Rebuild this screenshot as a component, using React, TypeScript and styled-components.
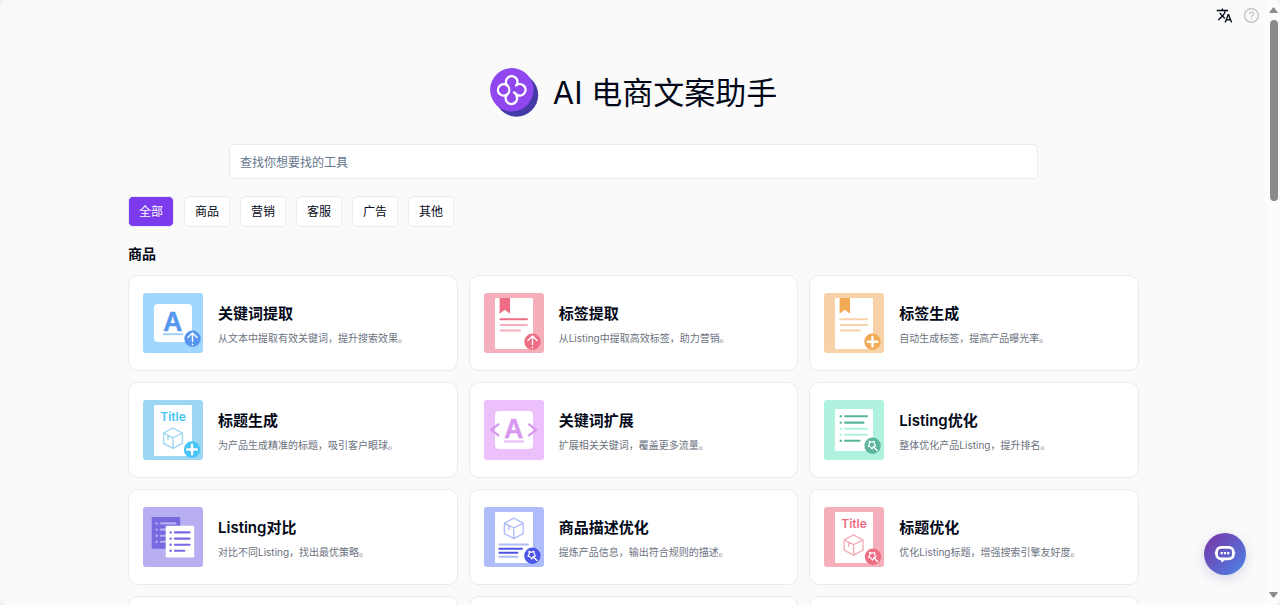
import React from "react";
import styled, { createGlobalStyle } from "styled-components";
import { MdTranslate } from "react-icons/md";
import { AiOutlineQuestionCircle } from "react-icons/ai";

const GlobalStyle = createGlobalStyle`
  *, *::before, *::after { box-sizing: border-box; }
  body {
    margin: 0;
    background: #f1f1f1;
    color: #020817;
    font-family: Inter, "Noto Sans CJK SC", sans-serif;
  }
  button, input { font-family: inherit; }
`;

const Shell = styled.div`
  display: flex;
  height: 100vh;
  border-radius: 8px;
  overflow: hidden;
  background: #fafafa;
`;

const Scroller = styled.div`
  flex: 1;
  min-width: 0;
  overflow-y: auto;
  scrollbar-width: none;
`;

const Rail = styled.div`
  width: 13px;
  display: flex;
  flex-direction: column;
  align-items: center;
  justify-content: space-between;
  padding: 7px 0;
  background: #fcfcfc;
`;

const RailTop = styled.div`
  flex: 1;
  display: flex;
  flex-direction: column;
  align-items: center;
  gap: 7px;
`;

const Thumb = styled.div`
  width: 8px;
  height: 31%;
  border-radius: 4px;
  background: #8b8b8b;
`;

const TopBar = styled.div`
  display: flex;
  justify-content: flex-end;
  align-items: center;
  gap: 10px;
  height: 31px;
  padding: 0 7px;
`;

const IconButton = styled.button<{ $color: string }>`
  display: flex;
  padding: 0;
  border: 0;
  background: none;
  color: ${(p) => p.$color};
  cursor: pointer;
`;

const Main = styled.main`
  display: flex;
  flex-direction: column;
  padding: 37px 128px 24px;
`;

const Hero = styled.header`
  display: flex;
  justify-content: center;
  align-items: center;
  gap: 14px;
  height: 49px;
`;

const HeroTitle = styled.h1`
  margin: 0;
  font-size: 31px;
  font-weight: 400;
  line-height: 48px;
`;

const Search = styled.input`
  align-self: center;
  width: 80%;
  height: 35px;
  margin: 27px 0 17px;
  padding: 1px 10px 0;
  border: 1px solid #e6eaf1;
  border-radius: 5px;
  background: #fff;
  font-size: 12px;
  color: #020817;
  outline: none;
  &::placeholder { color: #64748b; opacity: 1; }
`;

const Filters = styled.div`
  display: flex;
  gap: 10px;
`;

const FilterButton = styled.button<{ $active?: boolean }>`
  height: 31px;
  padding: 0 10px;
  border: 1px solid #e6eaf1;
  border-radius: 5px;
  background: ${(p) => (p.$active ? "#7c3aed" : "#fff")};
  color: ${(p) => (p.$active ? "#f8fafc" : "#020817")};
  font-size: 12px;
  line-height: 20px;
  cursor: pointer;
`;

const SectionTitle = styled.h2`
  margin: 17px 0 11px;
  font-size: 14px;
  font-weight: 700;
  line-height: 20px;
`;

const Grid = styled.div`
  display: grid;
  grid-template-columns: repeat(3, minmax(0, 1fr));
  gap: 11px;
`;

const Card = styled.a`
  display: flex;
  align-items: center;
  gap: 15px;
  min-height: 96px;
  padding: 17px 14px;
  border: 1px solid #e6eaf1;
  border-radius: 10px;
  background: #fff;
  color: inherit;
  text-decoration: none;
`;

const Tile = styled.svg`
  flex: none;
  width: 60px;
  height: 60px;
`;

const CardText = styled.div`
  display: flex;
  flex-direction: column;
  gap: 2px;
  min-width: 0;
`;

const CardTitle = styled.h3`
  margin: 0;
  font-size: 15px;
  font-weight: 600;
  line-height: 28px;
`;

const CardDesc = styled.p`
  margin: 0;
  color: #6b7280;
  font-size: 10px;
  line-height: 16px;
`;

const ChatButton = styled.button`
  position: fixed;
  right: 34px;
  bottom: 30px;
  display: flex;
  align-items: center;
  justify-content: center;
  width: 42px;
  height: 42px;
  padding: 0;
  border: 0;
  border-radius: 50%;
  background: linear-gradient(135deg, #7a32a4 0%, #4a86e8 100%);
  box-shadow: 0 3px 12px rgba(80, 90, 170, 0.22);
  cursor: pointer;
`;

function Logo() {
  return (
    <svg width="49" height="49" viewBox="0 0 49 49" aria-hidden="true">
      <circle cx="26.5" cy="27" r="21.7" fill="#453ba6" />
      <circle cx="21.8" cy="21.8" r="21.7" fill="#9147f0" />
      <path
        d="M24 24.4L26.2 26.2A5.7 5.7 0 1 0 26.2 17.4A5.7 5.7 0 1 0 17.2 17.4A5.7 5.7 0 1 0 17.2 26.4A5.7 5.7 0 1 0 26.4 27.6"
        fill="none"
        stroke="#fff"
        strokeWidth="2.4"
        strokeLinecap="round"
        strokeLinejoin="round"
      />
      <path d="M17.2 17.4A5.7 5.7 0 0 1 17.2 26.4" fill="none" stroke="#fff" strokeWidth="2.2" />
    </svg>
  );
}

type BadgeKind = "up" | "plus" | "wand";

function Badge({ kind, x, y, color }: { kind: BadgeKind; x: number; y: number; color: string }) {
  return (
    <g transform={`translate(${x} ${y})`} fill="none" stroke="#fff" strokeLinecap="round" strokeLinejoin="round">
      <circle r="8.2" fill={color} stroke="none" />
      {kind === "up" && (
        <path d="M0 2.8V-5.4M-4.6 -1.4L0 -5.8L4.6 -1.4M0 5.4V5.9" strokeWidth="1.4" />
      )}
      {kind === "plus" && <path d="M0 -4.8V4.8M-4.8 0H4.8" strokeWidth="2.4" />}
      {kind === "wand" && (
        <>
          <path
            d="M-3.4 -4.4L-1 -3.5L1.6 -4.4L1.7 -2L3 .2L.8 1L-.6 3.2L-2 1.2L-4.4 .4L-3.1 -1.9Z"
            strokeWidth="1.2"
          />
          <path d="M.9 1.1L4.6 4.8" strokeWidth="1.4" />
        </>
      )}
    </g>
  );
}

const Cube = ({ x, y, color }: { x: number; y: number; color: string }) => (
  <path
    transform={`translate(${x} ${y})`}
    d="M0 -10.2L9.4 -5.2V5.2L0 10.2L-9.4 5.2V-5.2ZM-9.4 -5.2L0 -.4L9.4 -5.2M0 -.4V10.2M-5 -2.8V1.2"
    fill="none"
    stroke={color}
    strokeWidth="1.4"
    strokeLinejoin="round"
    strokeLinecap="round"
  />
);

const Bar = ({ x1, x2, y, color, w = 1.9 }: { x1: number; x2: number; y: number; color: string; w?: number }) => (
  <path d={`M${x1 + 1} ${y}H${x2 - 1}`} stroke={color} strokeWidth={w} strokeLinecap="round" />
);

const Item = ({ x, end, y, color }: { x: number; end: number; y: number; color: string }) => (
  <>
    <circle cx={x} cy={y} r="1.2" fill={color} />
    <Bar x1={x + 3.3} x2={end} y={y} color={color} w={2.1} />
  </>
);

const Sheet = () => <rect x="11" y="5" width="38" height="51" rx="1" fill="#fff" />;

const Letter = ({ color }: { color: string }) => (
  <text
    x="29.8"
    y="38.2"
    textAnchor="middle"
    fontFamily="Inter, sans-serif"
    fontWeight="600"
    fontSize="26"
    fill={color}
    stroke={color}
    strokeWidth=".5"
    strokeLinejoin="round"
  >
    A
  </text>
);

const TitleWord = ({ color }: { color: string }) => (
  <text x="30" y="20.5" textAnchor="middle" fontFamily="Inter, sans-serif" fontWeight="600" fontSize="12" fill={color}>
    Title
  </text>
);

const Bookmark = ({ color }: { color: string }) => (
  <path d="M15.6 5H26V20.8L20.8 16.8L15.6 20.8Z" fill={color} />
);

function Background({ color, children }: { color: string; children: React.ReactNode }) {
  return (
    <Tile viewBox="0 0 60 60" aria-hidden="true">
      <rect width="60" height="60" rx="3" fill={color} />
      {children}
    </Tile>
  );
}

const tools = [
  {
    title: "关键词提取",
    desc: "从文本中提取有效关键词，提升搜索效果。",
    icon: (
      <Background color="#9fd7ff">
        <rect x="11" y="11" width="38" height="38" rx="4" fill="#fff" />
        <Letter color="#5696ee" />
        <path d="M20 41.2H40" stroke="#9fd0fa" strokeWidth="2" />
        <Badge kind="up" x={49.5} y={45.8} color="#5696ee" />
      </Background>
    ),
  },
  {
    title: "标签提取",
    desc: "从Listing中提取高效标签，助力营销。",
    icon: (
      <Background color="#f4afba">
        <Sheet />
        <Bookmark color="#ee6c84" />
        <Bar x1={15.5} x2={44} y={26.3} color="#ee6c84" />
        <Bar x1={15.5} x2={44} y={32} color="#f4afba" />
        <Bar x1={15.5} x2={37} y={37.5} color="#f4afba" />
        <Badge kind="up" x={48.5} y={48.8} color="#ee6c84" />
      </Background>
    ),
  },
  {
    title: "标签生成",
    desc: "自动生成标签，提高产品曝光率。",
    icon: (
      <Background color="#f7d2a8">
        <Sheet />
        <Bookmark color="#f3aa55" />
        <Bar x1={15.5} x2={44} y={26.3} color="#f7d2a8" />
        <Bar x1={15.5} x2={44} y={32} color="#f7d2a8" />
        <Bar x1={15.5} x2={37} y={37.5} color="#f7d2a8" />
        <Badge kind="plus" x={48.5} y={48.8} color="#f3aa55" />
      </Background>
    ),
  },
  {
    title: "标题生成",
    desc: "为产品生成精准的标题，吸引客户眼球。",
    icon: (
      <Background color="#9cd6f3">
        <Sheet />
        <TitleWord color="#45c4f8" />
        <Cube x={30} y={38.2} color="#9cd6f3" />
        <Badge kind="plus" x={49} y={49.5} color="#45c4f8" />
      </Background>
    ),
  },
  {
    title: "关键词扩展",
    desc: "扩展相关关键词，覆盖更多流量。",
    icon: (
      <Background color="#ebc0fb">
        <rect x="11" y="11" width="38" height="38" rx="4" fill="#fff" />
        <Letter color="#d898ef" />
        <path d="M20 41.5H40" stroke="#ebc0fb" strokeWidth="2.4" />
        <path
          d="M14.4 24.4L7.2 29.8L14.4 35.4M45 24.4L52.2 29.8L45 35.4"
          fill="none"
          stroke="#d898ef"
          strokeWidth="2.2"
          strokeLinecap="round"
          strokeLinejoin="round"
        />
      </Background>
    ),
  },
  {
    title: "Listing优化",
    desc: "整体优化产品Listing，提升排名。",
    icon: (
      <Background color="#aff2df">
        <rect x="11" y="9" width="38" height="42" rx="1" fill="#fff" />
        <Item x={16.8} end={44} y={16.3} color="#58b59b" />
        <Item x={16.8} end={40.5} y={22.6} color="#58b59b" />
        <Item x={16.8} end={44} y={28.8} color="#aff2df" />
        <Item x={16.8} end={44} y={34.8} color="#aff2df" />
        <Item x={16.8} end={36.5} y={40.7} color="#58b59b" />
        <Badge kind="wand" x={48.6} y={45.8} color="#5cb59c" />
      </Background>
    ),
  },
  {
    title: "Listing对比",
    desc: "对比不同Listing，找出最优策略。",
    icon: (
      <Background color="#b8aff3">
        <rect x="8.7" y="10" width="28.5" height="31.7" rx="1" fill="#7769df" />
        {[16.4, 22.6, 28.7, 34.7].map((y) => (
          <Item key={y} x={13.6} end={33.4} y={y} color="#b8aff3" />
        ))}
        <rect x="22.7" y="18.7" width="28.5" height="31.7" rx="1" fill="#fff" />
        {[25.4, 31.6, 37.7, 43.7].map((y, i) => (
          <Item key={y} x={27.6} end={i === 3 ? 42.3 : 47.6} y={y} color="#7769df" />
        ))}
      </Background>
    ),
  },
  {
    title: "商品描述优化",
    desc: "提炼产品信息，输出符合规则的描述。",
    icon: (
      <Background color="#aebdf9">
        <Sheet />
        <Cube x={29.8} y={21.4} color="#aebdf9" />
        <Bar x1={14.3} x2={45} y={37.5} color="#aebdf9" />
        <Bar x1={14.3} x2={39} y={41.7} color="#4b55e2" />
        <Bar x1={14.3} x2={34.5} y={45.8} color="#4b55e2" />
        <Bar x1={14.3} x2={34.5} y={49.8} color="#aebdf9" />
        <Badge kind="wand" x={48.4} y={48.8} color="#4b55e8" />
      </Background>
    ),
  },
  {
    title: "标题优化",
    desc: "优化Listing标题，增强搜索引擎友好度。",
    icon: (
      <Background color="#f4afba">
        <Sheet />
        <TitleWord color="#ee6c84" />
        <Cube x={29.6} y={38} color="#f4afba" />
        <Badge kind="wand" x={49} y={49.8} color="#ee6c84" />
      </Background>
    ),
  },
];

const filters = ["全部", "商品", "营销", "客服", "广告", "其他"];

export default function App() {
  return (
    <>
      <GlobalStyle />
      <Shell>
        <Scroller>
          <TopBar>
            <IconButton type="button" aria-label="语言" $color="#020817">
              <MdTranslate size={17} />
            </IconButton>
            <IconButton type="button" aria-label="帮助" $color="#bfbfbf">
              <AiOutlineQuestionCircle size={17} />
            </IconButton>
          </TopBar>
          <Main>
            <Hero>
              <Logo />
              <HeroTitle>AI 电商文案助手</HeroTitle>
            </Hero>
            <Search type="text" placeholder="查找你想要找的工具" aria-label="查找你想要找的工具" />
            <Filters>
              {filters.map((name, i) => (
                <FilterButton key={name} type="button" $active={i === 0}>
                  {name}
                </FilterButton>
              ))}
            </Filters>
            <SectionTitle>商品</SectionTitle>
            <Grid>
              {tools.map((tool) => (
                <Card key={tool.title} href="#">
                  {tool.icon}
                  <CardText>
                    <CardTitle>{tool.title}</CardTitle>
                    <CardDesc>{tool.desc}</CardDesc>
                  </CardText>
                </Card>
              ))}
              {[0, 1, 2].map((n) => (
                <Card key={n} as="div" aria-hidden="true" />
              ))}
            </Grid>
          </Main>
        </Scroller>
        <Rail aria-hidden="true">
          <RailTop>
            <svg width="9" height="6" viewBox="0 0 9 6">
              <path d="M4.5 .6L8.4 5.4H.6Z" fill="#8b8b8b" stroke="#8b8b8b" strokeLinejoin="round" />
            </svg>
            <Thumb />
          </RailTop>
          <svg width="9" height="6" viewBox="0 0 9 6">
            <path d="M4.5 5.4L8.4 .6H.6Z" fill="#8b8b8b" stroke="#8b8b8b" strokeLinejoin="round" />
          </svg>
        </Rail>
      </Shell>
      <ChatButton type="button" aria-label="在线客服">
        <svg width="22" height="18" viewBox="0 0 22 18" aria-hidden="true">
          <rect x="2.6" y="2.4" width="16.8" height="11.4" rx="4.6" fill="none" stroke="#fff" strokeWidth="2.8" />
          <path d="M6 14H12L8 17.4Z" fill="#fff" />
          <path d="M.8 8H4M18 8H21.2" stroke="#fff" strokeWidth="2.2" />
          <path d="M6.6 8.1H8.8M9.9 8.1H12.1M13.2 8.1H15.4" stroke="#fff" strokeWidth="2.2" />
        </svg>
      </ChatButton>
    </>
  );
}
